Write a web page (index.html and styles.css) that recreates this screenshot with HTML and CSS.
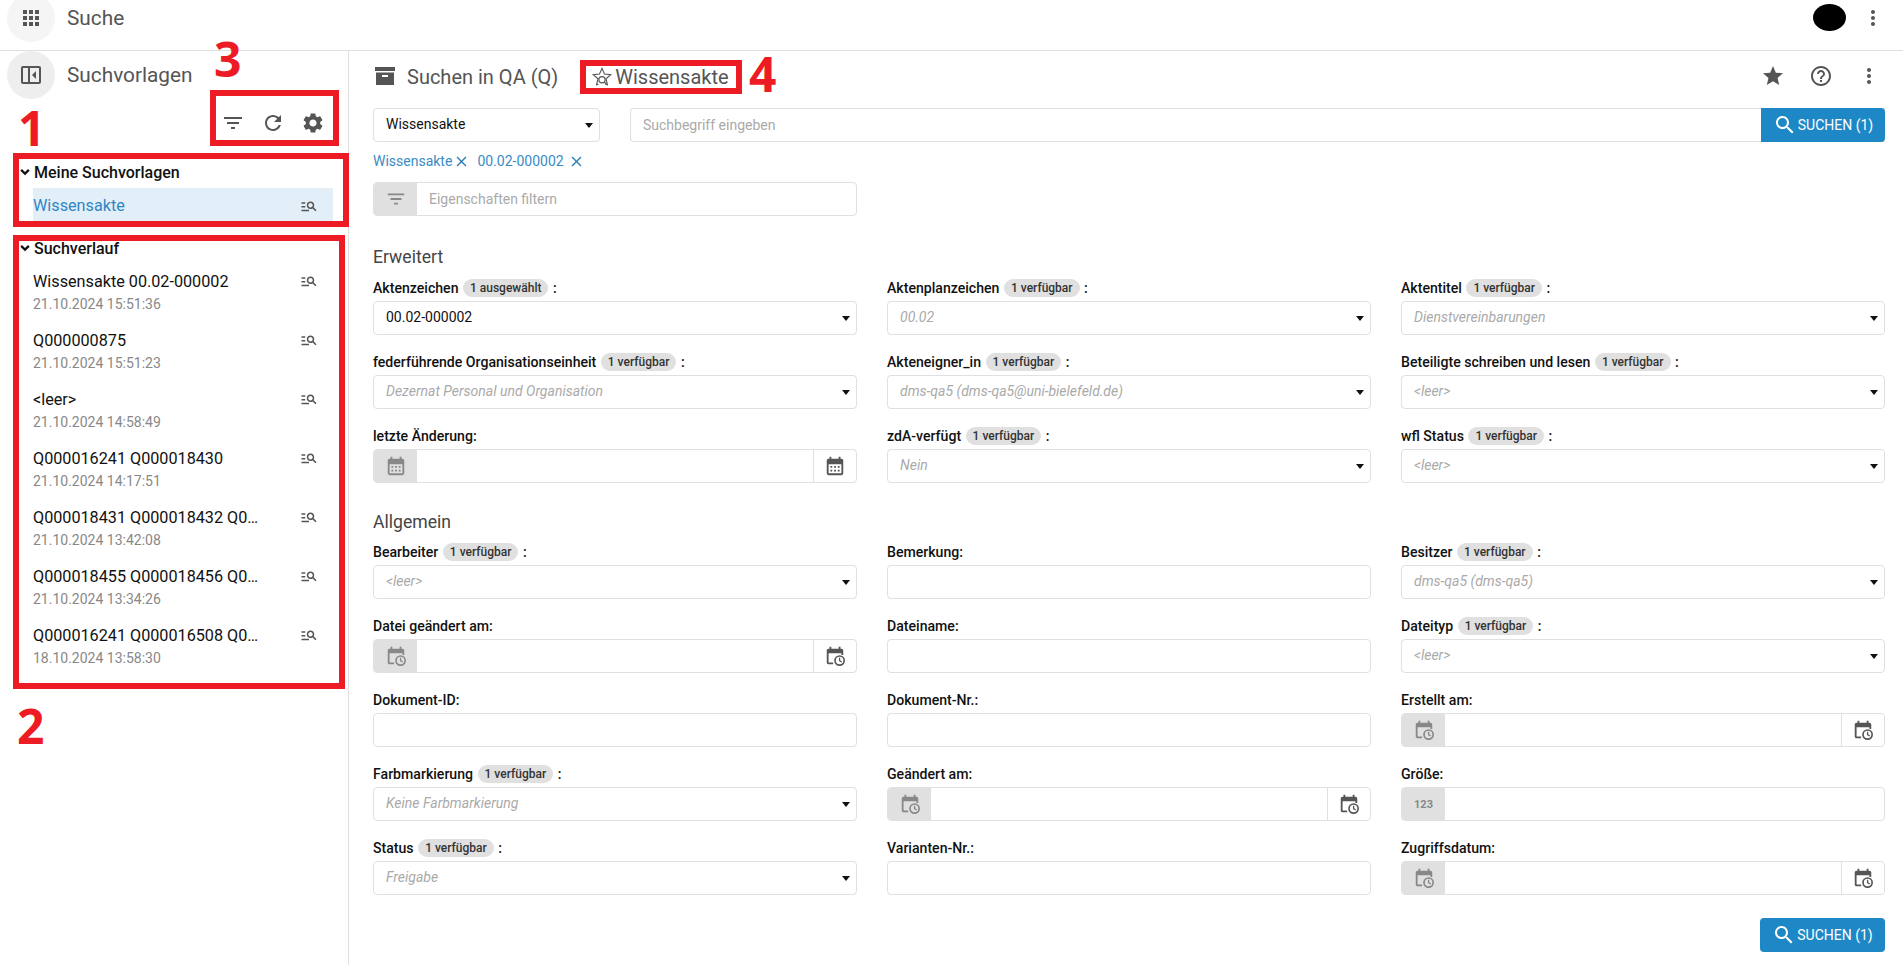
FILE: index.html
```html
<!DOCTYPE html>
<html lang="de">
<head>
    <meta charset="UTF-8">
    <meta name="viewport" content="width=device-width, initial-scale=1.0">
    <title>Suche</title>
    <link rel="stylesheet" href="styles.css">
</head>
<body>
    <!-- icon sprite -->
    <svg class="sprite" aria-hidden="true">
        <symbol id="i-apps" viewBox="0 0 24 24"><path d="M4 8h4V4H4v4zm6 12h4v-4h-4v4zm-6 0h4v-4H4v4zm0-6h4v-4H4v4zm6 0h4v-4h-4v4zm6-10v4h4V4h-4zm-6 4h4V4h-4v4zm6 6h4v-4h-4v4zm0 6h4v-4h-4v4z"/></symbol>
        <symbol id="i-panel" viewBox="0 0 24 24"><path fill-rule="evenodd" d="M4 3h16c1.100 0 2 .9 2 2v14c0 1.100-.9 2-2 2H4c-1.100 0-2-.9-2-2V5c0-1.100.9-2 2-2zm0 2v14h5V5H4zm7 0v14h9V5h-9z"/><path d="M17 8v8l-4-4z"/></symbol>
        <symbol id="i-filter" viewBox="0 0 24 24"><path d="M10 18h4v-2h-4v2zM3 6v2h18V6H3zm3 7h12v-2H6v2z"/></symbol>
        <symbol id="i-refresh" viewBox="0 0 24 24"><path d="M17.650 6.350C16.200 4.900 14.210 4 12 4c-4.420 0-7.990 3.580-7.990 8s3.570 8 7.990 8c3.730 0 6.840-2.550 7.730-6h-2.080c-.82 2.330-3.040 4-5.650 4-3.310 0-6-2.690-6-6s2.690-6 6-6c1.660 0 3.140.69 4.220 1.780L13 11h7V4l-2.350 2.350z"/></symbol>
        <symbol id="i-gear" viewBox="0 0 24 24"><path d="M19.140 12.940c.04-.3.06-.61.06-.94 0-.32-.02-.64-.07-.94l2.030-1.580c.18-.14.23-.41.12-.61l-1.920-3.320c-.12-.22-.37-.29-.59-.22l-2.390.96c-.5-.38-1.030-.7-1.620-.94l-.36-2.540c-.04-.24-.24-.41-.48-.41h-3.840c-.24 0-.43.17-.47.41l-.36 2.540c-.59.24-1.130.57-1.620.94l-2.390-.96c-.22-.08-.47 0-.59.22L2.740 8.870c-.12.21-.08.47.12.61l2.030 1.580c-.05.3-.09.63-.09.94s.02.64.07.94l-2.030 1.580c-.18.14-.23.41-.12.61l1.920 3.320c.12.22.37.29.59.22l2.390-.96c.5.38 1.030.7 1.620.94l.36 2.540c.05.24.24.41.48.41h3.840c.24 0 .44-.17.47-.41l.36-2.540c.59-.24 1.130-.56 1.620-.94l2.390.96c.22.08.47 0 .59-.22l1.920-3.320c.12-.22.07-.47-.12-.61l-2.010-1.580zM12 15.600c-1.980 0-3.600-1.620-3.600-3.600s1.620-3.600 3.600-3.600 3.600 1.620 3.600 3.600-1.620 3.600-3.600 3.600z"/></symbol>
        <symbol id="i-more" viewBox="0 0 24 24"><path d="M12 8c1.100 0 2-.9 2-2s-.9-2-2-2-2 .9-2 2 .9 2 2 2zm0 2c-1.100 0-2 .9-2 2s.9 2 2 2 2-.9 2-2-.9-2-2-2zm0 6c-1.100 0-2 .9-2 2s.9 2 2 2 2-.9 2-2-.9-2-2-2z"/></symbol>
        <symbol id="i-star" viewBox="0 0 24 24"><path d="M12 17.270L18.180 21l-1.640-7.030L22 9.240l-7.190-.61L12 2 9.190 8.630 2 9.240l5.460 4.730L5.820 21z"/></symbol>
        <symbol id="i-help" viewBox="0 0 24 24"><path d="M11 18h2v-2h-2v2zm1-16C6.480 2 2 6.480 2 12s4.480 10 10 10 10-4.480 10-10S17.520 2 12 2zm0 18c-4.410 0-8-3.590-8-8s3.590-8 8-8 8 3.590 8 8-3.590 8-8 8zm0-14c-2.210 0-4 1.790-4 4h2c0-1.100.9-2 2-2s2 .9 2 2c0 2-3 1.750-3 5h2c0-2.250 3-2.500 3-5 0-2.210-1.790-4-4-4z"/></symbol>
        <symbol id="i-archive" viewBox="0 0 24 24"><path fill-rule="evenodd" d="M2 3h20v4H2zM3 8.500h18V21H3zM9 11v2h6v-2z"/></symbol>
        <symbol id="i-search" viewBox="0 0 24 24"><path d="M15.500 14h-.79l-.28-.27C15.410 12.590 16 11.110 16 9.500 16 5.910 13.090 3 9.500 3S3 5.910 3 9.500 5.910 16 9.500 16c1.610 0 3.090-.59 4.230-1.570l.27.28v.79l5 4.990L20.490 19l-4.990-5zm-6 0C7.010 14 5 11.990 5 9.500S7.010 5 9.500 5 14 7.010 14 9.500 11.990 14 9.500 14z"/></symbol>
        <symbol id="i-manage" viewBox="0 0 24 24"><path d="M7 9H2V7h5v2zm0 3H2v2h5v-2zm13.590 7l-3.830-3.830c-.8.52-1.740.83-2.760.83-2.760 0-5-2.240-5-5s2.240-5 5-5 5 2.240 5 5c0 1.020-.31 1.960-.83 2.750L22 17.590 20.590 19zM17 11c0-1.650-1.350-3-3-3s-3 1.350-3 3 1.350 3 3 3 3-1.350 3-3zM2 19h10v-2H2v2z"/></symbol>
        <symbol id="i-close" viewBox="0 0 24 24"><path d="M19 6.410L17.590 5 12 10.590 6.410 5 5 6.410 10.590 12 5 17.590 6.410 19 12 13.410 17.590 19 19 17.590 13.410 12z"/></symbol>
        <symbol id="i-chevron" viewBox="0 0 24 24"><path d="M16.590 7.590L12 12.170 7.410 7.590 5 10l7 7 7-7z"/></symbol>
        <symbol id="i-saved" viewBox="0 0 24 24"><path fill="none" stroke="currentColor" stroke-width="1.200" d="M15.800 19.600l2.100 1-1.500-6.700 5.100-4.500-6.800-.6L12 2.500 9.300 8.800l-6.800.6 5.100 4.500-1.500 6.700 2.100-1"/><circle cx="12" cy="15" r="3.400" fill="none" stroke="currentColor" stroke-width="1.300"/><path d="M14.400 17.400l2.600 2.800" stroke="currentColor" stroke-width="1.300"/></symbol>
        <symbol id="i-cal" viewBox="0 0 24 24"><path fill-rule="evenodd" d="M5 4h1V2h2v2h8V2h2v2h1c1.100 0 2 .9 2 2v14c0 1.100-.9 2-2 2H5c-1.100 0-2-.9-2-2V6c0-1.100.9-2 2-2zm0 6v10h14V10H5z"/><path d="M7 12h2v2H7zM11 12h2v2h-2zM15 12h2v2h-2zM7 16h2v2H7zM11 16h2v2h-2zM15 16h2v2h-2z"/></symbol>
        <symbol id="i-caltime" viewBox="0 0 24 24"><path d="M5 4h1V2h2v2h8V2h2v2h1c1.100 0 2 .9 2 2v5h-2V9H5v10h5v2H5c-1.100 0-2-.9-2-2V6c0-1.100.9-2 2-2z"/><circle cx="17" cy="17" r="5" fill="none" stroke="currentColor" stroke-width="1.800"/><path d="M16.300 14h1.400v2.700l2 1.200-.7 1.100-2.700-1.600z"/></symbol>
    </svg>

    <header class="topbar">
        <button class="round-btn"><svg class="icon"><use href="#i-apps"/></svg></button>
        <span class="app-title">Suche</span>
        <span class="avatar"></span>
        <svg class="icon"><use href="#i-more"/></svg>
    </header>

    <div class="page">
        <aside class="sidebar">
            <div class="side-head">
                <button class="round-btn round-btn-dark"><svg class="icon"><use href="#i-panel"/></svg></button>
                <span class="app-title">Suchvorlagen</span>
            </div>
            <div class="side-tools">
                <svg class="icon"><use href="#i-filter"/></svg>
                <svg class="icon"><use href="#i-refresh"/></svg>
                <svg class="icon"><use href="#i-gear"/></svg>
            </div>

            <div class="tree-head tree-head-first"><svg class="chevron"><use href="#i-chevron"/></svg>Meine Suchvorlagen</div>
            <div class="saved-item">
                <span>Wissensakte</span>
                <svg class="manage"><use href="#i-manage"/></svg>
            </div>

            <div class="tree-head"><svg class="chevron"><use href="#i-chevron"/></svg>Suchverlauf</div>
            <ul class="history">
                <li>
                    <div class="history-text"><div class="history-title">Wissensakte 00.02-000002</div><div class="history-date">21.10.2024 15:51:36</div></div>
                    <svg class="manage"><use href="#i-manage"/></svg>
                </li>
                <li>
                    <div class="history-text"><div class="history-title">Q000000875</div><div class="history-date">21.10.2024 15:51:23</div></div>
                    <svg class="manage"><use href="#i-manage"/></svg>
                </li>
                <li>
                    <div class="history-text"><div class="history-title">&lt;leer&gt;</div><div class="history-date">21.10.2024 14:58:49</div></div>
                    <svg class="manage"><use href="#i-manage"/></svg>
                </li>
                <li>
                    <div class="history-text"><div class="history-title">Q000016241 Q000018430</div><div class="history-date">21.10.2024 14:17:51</div></div>
                    <svg class="manage"><use href="#i-manage"/></svg>
                </li>
                <li>
                    <div class="history-text"><div class="history-title">Q000018431 Q000018432 Q0…</div><div class="history-date">21.10.2024 13:42:08</div></div>
                    <svg class="manage"><use href="#i-manage"/></svg>
                </li>
                <li>
                    <div class="history-text"><div class="history-title">Q000018455 Q000018456 Q0…</div><div class="history-date">21.10.2024 13:34:26</div></div>
                    <svg class="manage"><use href="#i-manage"/></svg>
                </li>
                <li>
                    <div class="history-text"><div class="history-title">Q000016241 Q000016508 Q0…</div><div class="history-date">18.10.2024 13:58:30</div></div>
                    <svg class="manage"><use href="#i-manage"/></svg>
                </li>
            </ul>
        </aside>

        <main class="main">
            <div class="main-head">
                <svg class="icon"><use href="#i-archive"/></svg>
                <span class="main-title">Suchen in QA (Q)</span>
                <span class="main-title main-saved"><svg class="icon icon-saved"><use href="#i-saved"/></svg>Wissensakte</span>
                <span class="main-actions">
                    <svg class="icon"><use href="#i-star"/></svg>
                    <svg class="icon"><use href="#i-help"/></svg>
                    <svg class="icon"><use href="#i-more"/></svg>
                </span>
            </div>

            <div class="search-row">
                <div class="field field-type"><span class="value">Wissensakte</span><i class="caret"></i></div>
                <div class="search-box">
                    <span class="value placeholder">Suchbegriff eingeben</span>
                    <button class="btn-search"><svg class="icon"><use href="#i-search"/></svg>SUCHEN (1)</button>
                </div>
            </div>

            <div class="chips">
                <span class="chip">Wissensakte<svg><use href="#i-close"/></svg></span>
                <span class="chip chip-value">00.02-000002<svg><use href="#i-close"/></svg></span>
            </div>

            <div class="field field-filter">
                <span class="addon"><svg class="icon"><use href="#i-filter"/></svg></span>
                <span class="value placeholder">Eigenschaften filtern</span>
            </div>

            <h2 class="section-title section-first">Erweitert</h2>
            <div class="form-grid">
                <div>
                    <div class="label">Aktenzeichen <span class="badge">1 ausgewählt</span> :</div>
                    <div class="field"><span class="value">00.02-000002</span><i class="caret"></i></div>
                </div>
                <div>
                    <div class="label">Aktenplanzeichen <span class="badge">1 verfügbar</span> :</div>
                    <div class="field"><span class="value hint">00.02</span><i class="caret"></i></div>
                </div>
                <div>
                    <div class="label">Aktentitel <span class="badge">1 verfügbar</span> :</div>
                    <div class="field"><span class="value hint">Dienstvereinbarungen</span><i class="caret"></i></div>
                </div>
                <div>
                    <div class="label">federführende Organisationseinheit <span class="badge">1 verfügbar</span> :</div>
                    <div class="field"><span class="value hint">Dezernat Personal und Organisation</span><i class="caret"></i></div>
                </div>
                <div>
                    <div class="label">Akteneigner_in <span class="badge">1 verfügbar</span> :</div>
                    <div class="field"><span class="value hint">dms-qa5 (dms-qa5@uni-bielefeld.de)</span><i class="caret"></i></div>
                </div>
                <div>
                    <div class="label">Beteiligte schreiben und lesen <span class="badge">1 verfügbar</span> :</div>
                    <div class="field"><span class="value hint">&lt;leer&gt;</span><i class="caret"></i></div>
                </div>
                <div>
                    <div class="label">letzte Änderung:</div>
                    <div class="field">
                        <span class="addon"><svg class="icon"><use href="#i-cal"/></svg></span>
                        <span class="value"></span>
                        <span class="addon-end"><svg class="icon"><use href="#i-cal"/></svg></span>
                    </div>
                </div>
                <div>
                    <div class="label">zdA-verfügt <span class="badge">1 verfügbar</span> :</div>
                    <div class="field"><span class="value hint">Nein</span><i class="caret"></i></div>
                </div>
                <div>
                    <div class="label">wfl Status <span class="badge">1 verfügbar</span> :</div>
                    <div class="field"><span class="value hint">&lt;leer&gt;</span><i class="caret"></i></div>
                </div>
            </div>

            <h2 class="section-title">Allgemein</h2>
            <div class="form-grid">
                <div>
                    <div class="label">Bearbeiter <span class="badge">1 verfügbar</span> :</div>
                    <div class="field"><span class="value hint">&lt;leer&gt;</span><i class="caret"></i></div>
                </div>
                <div>
                    <div class="label">Bemerkung:</div>
                    <div class="field"></div>
                </div>
                <div>
                    <div class="label">Besitzer <span class="badge">1 verfügbar</span> :</div>
                    <div class="field"><span class="value hint">dms-qa5 (dms-qa5)</span><i class="caret"></i></div>
                </div>
                <div>
                    <div class="label">Datei geändert am:</div>
                    <div class="field">
                        <span class="addon"><svg class="icon"><use href="#i-caltime"/></svg></span>
                        <span class="value"></span>
                        <span class="addon-end"><svg class="icon"><use href="#i-caltime"/></svg></span>
                    </div>
                </div>
                <div>
                    <div class="label">Dateiname:</div>
                    <div class="field"></div>
                </div>
                <div>
                    <div class="label">Dateityp <span class="badge">1 verfügbar</span> :</div>
                    <div class="field"><span class="value hint">&lt;leer&gt;</span><i class="caret"></i></div>
                </div>
                <div>
                    <div class="label">Dokument-ID:</div>
                    <div class="field"></div>
                </div>
                <div>
                    <div class="label">Dokument-Nr.:</div>
                    <div class="field"></div>
                </div>
                <div>
                    <div class="label">Erstellt am:</div>
                    <div class="field">
                        <span class="addon"><svg class="icon"><use href="#i-caltime"/></svg></span>
                        <span class="value"></span>
                        <span class="addon-end"><svg class="icon"><use href="#i-caltime"/></svg></span>
                    </div>
                </div>
                <div>
                    <div class="label">Farbmarkierung <span class="badge">1 verfügbar</span> :</div>
                    <div class="field"><span class="value hint">Keine Farbmarkierung</span><i class="caret"></i></div>
                </div>
                <div>
                    <div class="label">Geändert am:</div>
                    <div class="field">
                        <span class="addon"><svg class="icon"><use href="#i-caltime"/></svg></span>
                        <span class="value"></span>
                        <span class="addon-end"><svg class="icon"><use href="#i-caltime"/></svg></span>
                    </div>
                </div>
                <div>
                    <div class="label">Größe:</div>
                    <div class="field">
                        <span class="addon addon-num">123</span>
                    </div>
                </div>
                <div>
                    <div class="label">Status <span class="badge">1 verfügbar</span> :</div>
                    <div class="field"><span class="value hint">Freigabe</span><i class="caret"></i></div>
                </div>
                <div>
                    <div class="label">Varianten-Nr.:</div>
                    <div class="field"></div>
                </div>
                <div>
                    <div class="label">Zugriffsdatum:</div>
                    <div class="field">
                        <span class="addon"><svg class="icon"><use href="#i-caltime"/></svg></span>
                        <span class="value"></span>
                        <span class="addon-end"><svg class="icon"><use href="#i-caltime"/></svg></span>
                    </div>
                </div>
            </div>

            <div class="form-foot">
                <button class="btn-search btn-rounded"><svg class="icon"><use href="#i-search"/></svg>SUCHEN (1)</button>
            </div>
        </main>
    </div>

    <!-- numbered callouts on top of the page -->
    <div class="mark mark-1"></div>
    <div class="mark mark-2"></div>
    <div class="mark mark-3"></div>
    <div class="mark mark-4"></div>
    <span class="mark-num num-1">1</span>
    <span class="mark-num num-2">2</span>
    <span class="mark-num num-3">3</span>
    <span class="mark-num num-4">4</span>
</body>
</html>
```

FILE: styles.css
```css
* {
    box-sizing: border-box;
}
html, body {
    height: 100%;
}
body {
    font-family: Roboto, "Liberation Sans", sans-serif;
    font-size: 14px;
    color: #111;
    background-color: #fff;
    margin: 0;
    overflow: hidden;
    position: relative;
}
.sprite {
    display: none;
}
.icon {
    width: 24px;
    height: 24px;
    fill: #555;
    color: #555;
    flex: none;
}
button {
    font-family: inherit;
    border: none;
    cursor: pointer;
}

/* top bar */
.topbar {
    height: 51px;
    display: flex;
    align-items: flex-start;
    border-bottom: 1px solid #e0e0e0;
    padding: 6px 18px 0 7px;
    overflow: hidden;
}
.topbar > .icon {
    margin-left: 15px;
}
.round-btn {
    width: 48px;
    height: 48px;
    border-radius: 50%;
    background-color: #f5f5f5;
    display: flex;
    align-items: center;
    justify-content: center;
    padding: 0;
    flex: none;
}
.topbar .round-btn {
    margin-top: -12px;
}
.round-btn-dark {
    background-color: #eee;
}
.app-title {
    font-size: 20.8px;
    font-weight: 400;
    color: #555;
    margin-left: 12px;
    line-height: 24px;
}
.avatar {
    width: 33px;
    height: 27px;
    background-color: #000;
    border-radius: 50%;
    margin-left: auto;
    margin-top: -2px;
}

/* left column */
.page {
    display: flex;
    height: calc(100% - 51px);
}
.sidebar {
    width: 349px;
    flex: none;
    border-right: 1px solid #e0e0e0;
}
.side-head {
    display: flex;
    align-items: center;
    padding-left: 7px;
}
.side-tools {
    display: flex;
    justify-content: flex-end;
    gap: 16px;
    padding: 12px 23px 0 0;
}
.tree-head {
    display: flex;
    align-items: center;
    height: 20px;
    margin-top: 17px;
    padding-left: 17px;
    font-size: 16px;
    font-weight: 500;
    color: #111;
}
.tree-head-first {
    margin-top: 27px;
}
.chevron {
    width: 16px;
    height: 16px;
    fill: #111;
    margin-right: 1px;
    flex: none;
}
.saved-item {
    display: flex;
    align-items: center;
    justify-content: space-between;
    height: 33px;
    width: 300px;
    margin: 6px 0 0 33px;
    padding: 2px 15px 0 0;
    background-color: #e3eff8;
    color: #2f86c5;
    font-size: 16.2px;
}
.manage {
    width: 18px;
    height: 18px;
    fill: #555;
    flex: none;
}
.history {
    list-style: none;
    margin: 0;
    padding: 0;
}
.history li {
    display: flex;
    justify-content: space-between;
    align-items: flex-start;
    height: 59px;
    width: 300px;
    margin-left: 33px;
    padding: 14px 15px 0 0;
}
.history-text {
    width: 240px;
}
.history-title {
    font-size: 16.2px;
    line-height: 20px;
    white-space: nowrap;
}
.history-date {
    font-size: 14px;
    line-height: 18px;
    margin-top: 3px;
    color: #888;
}

/* right column */
.main {
    flex: 1;
    padding: 12px 18px 0 24px;
    min-width: 0;
}
.main-head {
    display: flex;
    align-items: center;
    height: 26px;
}
.main-head > .icon {
    margin-right: 10px;
}
.main-title {
    font-size: 20px;
    line-height: 26px;
    padding-top: 1px;
    color: #555;
}
.main-saved {
    display: flex;
    align-items: center;
    margin-left: 33px;
}
.icon-saved {
    width: 22px;
    height: 22px;
    margin-right: 2px;
}
.main-actions {
    margin-left: auto;
    display: flex;
    gap: 24px;
    padding-right: 4px;
}
.search-row {
    display: flex;
    gap: 30px;
    margin-top: 19px;
}
.field {
    display: flex;
    align-items: center;
    height: 34px;
    background-color: #fff;
    border: 1px solid #e0e0e0;
    border-radius: 4px;
    overflow: hidden;
}
.field-type {
    width: 227px;
    flex: none;
}
.search-box {
    flex: 1;
    display: flex;
    align-items: center;
    height: 34px;
    border: 1px solid #e0e0e0;
    border-right: none;
    border-radius: 4px 0 0 4px;
}
.value {
    flex: 1;
    min-width: 0;
    padding: 0 12px 2px;
    font-size: 14px;
    white-space: nowrap;
    overflow: hidden;
}
.placeholder {
    color: #aaa;
    padding-bottom: 0;
}
.hint {
    color: #aaa;
    font-style: italic;
}
.caret {
    flex: none;
    width: 0;
    height: 0;
    border-left: 4px solid transparent;
    border-right: 4px solid transparent;
    border-top: 5px solid #111;
    margin-right: 6px;
}
.btn-search {
    display: flex;
    align-items: center;
    justify-content: center;
    gap: 1px;
    width: 124px;
    height: 34px;
    margin: 0 0 0 auto;
    padding: 0;
    background-color: #1e88c7;
    color: #fff;
    font-size: 14px;
    flex: none;
    border-radius: 0 4px 4px 0;
}
.btn-search .icon {
    width: 24px;
    height: 24px;
    fill: #fff;
}
.btn-rounded {
    width: 125px;
    border-radius: 4px;
}
.chips {
    display: flex;
    align-items: center;
    gap: 7px;
    height: 22px;
    margin-top: 8px;
}
.chip {
    display: flex;
    align-items: center;
    gap: 1px;
    font-size: 14px;
    color: #3a8cc4;
}
.chip svg {
    width: 17px;
    height: 17px;
    fill: #2f7fb5;
}
.chip-value {
    gap: 4px;
}
.field-filter {
    width: 484px;
    margin-top: 10px;
}
.addon {
    display: flex;
    align-items: center;
    justify-content: center;
    width: 43px;
    height: 100%;
    flex: none;
    background-color: #e0e0e0;
}
.addon .icon {
    fill: #888;
    color: #888;
    width: 22px;
    height: 22px;
}
.addon-num {
    font-size: 11px;
    font-weight: 700;
    color: #888;
}
.addon-end {
    display: flex;
    align-items: center;
    justify-content: center;
    width: 43px;
    height: 100%;
    flex: none;
    border-left: 1px solid #e0e0e0;
}
.addon-end .icon {
    width: 22px;
    height: 22px;
}
.section-title {
    font-size: 17.6px;
    font-weight: 400;
    line-height: 22px;
    color: #444;
    margin: 28px 0 10px;
}
.section-first {
    margin: 30px 0 11px;
}
.form-grid {
    display: grid;
    grid-template-columns: repeat(3, 1fr);
    column-gap: 30px;
    row-gap: 18px;
}
.label {
    height: 22px;
    line-height: 18px;
    font-size: 14.1px;
    font-weight: 500;
    color: #111;
    white-space: nowrap;
}
.badge {
    display: inline-block;
    height: 18px;
    line-height: 18px;
    padding: 0 7px;
    margin: 0 1px;
    border-radius: 9px;
    background-color: #e0e0e0;
    color: #333;
    font-size: 12px;
    vertical-align: top;
}
.form-foot {
    display: flex;
    justify-content: flex-end;
    margin-top: 23px;
}

/* red callouts */
.mark {
    position: absolute;
    border: 6px solid #ed1c24;
}
.mark-1 {
    left: 13px;
    top: 153px;
    width: 336px;
    height: 74px;
}
.mark-2 {
    left: 13px;
    top: 235px;
    width: 332px;
    height: 454px;
}
.mark-3 {
    left: 210px;
    top: 90px;
    width: 129px;
    height: 56px;
}
.mark-4 {
    left: 580px;
    top: 60px;
    width: 162px;
    height: 34px;
}
.mark-num {
    position: absolute;
    font-family: "Open Sans", sans-serif;
    font-size: 48px;
    font-weight: 700;
    line-height: 48px;
    color: #ed1c24;
}
.num-1 {
    left: 18px;
    top: 104px;
}
.num-2 {
    left: 17px;
    top: 702px;
}
.num-3 {
    left: 214px;
    top: 35px;
}
.num-4 {
    left: 749px;
    top: 50px;
}
```
